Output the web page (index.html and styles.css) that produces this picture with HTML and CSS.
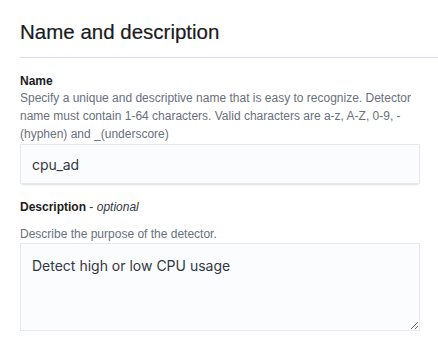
FILE: index.html
```html
<!DOCTYPE html>
<html>
<head>
    <title>Name and description</title>
    <link rel="stylesheet" href="styles.css">
</head>
<body>
    <div class="panel">
        <h2 class="panel-title">Name and description</h2>
        <hr class="rule">

        <!-- Name row -->
        <div class="form-row">
            <label class="row-label" for="name">Name</label>
            <div class="help-text">Specify a unique and descriptive name that is easy to recognize. Detector name must contain 1-64 characters. Valid characters are a-z, A-Z, 0-9, - (hyphen) and _(underscore)</div>
            <input type="text" id="name" class="text-field" value="cpu_ad">
        </div>

        <!-- Description row -->
        <div class="form-row desc-row">
            <label class="row-label" for="description">Description <span class="optional">- <em>optional</em></span></label>
            <div class="help-text">Describe the purpose of the detector.</div>
            <textarea id="description" class="text-area">Detect high or low CPU usage</textarea>
        </div>
    </div>
</body>
</html>
```

FILE: styles.css
```css
body {
    margin: 0;
    background-color: #ffffff;
    font-family: "Liberation Sans", Arial, sans-serif;
    color: #1a1c21;
}

/* Panel holding the form */
.panel {
    padding: 20px 0 0 20px;
}

.panel-title {
    margin: 0;
    font-size: 20.5px;
    line-height: 24px;
    font-weight: normal;
    color: #1a1c21;
    -webkit-text-stroke: 0.2px #1a1c21;
}

.rule {
    margin: 13px 0 16px 0;
    border: none;
    height: 1px;
    background-color: #d3dae6;
}

.form-row {
    width: 400px;
}

.row-label {
    display: block;
    font-size: 12px;
    line-height: 15px;
    font-weight: bold;
    color: #1a1c21;
}

.optional {
    font-weight: normal;
    color: #343741;
}

.help-text {
    font-size: 12px;
    line-height: 18px;
    color: #69707d;
    margin-bottom: 1px;
}

.desc-row {
    margin-top: 16px;
}

.desc-row .help-text {
    margin-top: 10px;
    margin-bottom: 0;
}

.text-field,
.text-area {
    display: block;
    box-sizing: border-box;
    width: 100%;
    margin: 0;
    border: 1px solid #e6e8ec;
    border-radius: 0;
    background-color: #fbfcfd;
    box-shadow: 0 1px 1px -1px rgba(152, 162, 179, 0.3), 0 3px 2px -2px rgba(152, 162, 179, 0.3);
    font-family: Inter, "Liberation Sans", sans-serif;
    font-size: 14px;
    color: #343741;
    outline: none;
}

.text-field {
    height: 40px;
    padding: 0 11px;
}

.text-area {
    height: 88px;
    padding: 12px 11px 10px 11px;
    line-height: 20px;
    resize: vertical;
}
```
